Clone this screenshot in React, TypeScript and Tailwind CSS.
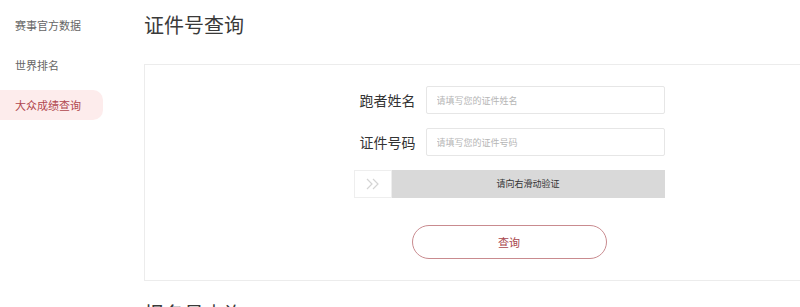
import React, { useState } from "react";

const menu = ["赛事官方数据", "世界排名", "大众成绩查询"];

const App: React.FC = () => {
  const [active] = useState(2);
  const [name, setName] = useState("");
  const [idNo, setIdNo] = useState("");

  return (
    <div
      className="w-[800px] h-[307px] overflow-hidden bg-white flex"
      style={{ fontFamily: '"Noto Sans CJK SC", "Noto Sans", sans-serif' }}
    >
      {/* Sidebar */}
      <div className="w-[144px] shrink-0 pt-[10px] flex flex-col gap-[10px]">
        {menu.map((m, i) => (
          <div
            key={m}
            className={`w-[103px] h-[30px] pl-[15px] flex items-center text-[11px] rounded-r-[10px] ${
              i === active ? "bg-[#fdecec] text-[#b1474e]" : "text-[#666]"
            }`}
          >
            {m}
          </div>
        ))}
      </div>

      {/* Main */}
      <div className="w-[730px] shrink-0">
        <h1 className="mt-[10px] h-[30px] leading-[30px] text-[20px] text-[#3a3a3a] font-normal">证件号查询</h1>

        <div className="mt-[24px] w-[730px] border border-[#ececec] pt-[21px] pb-[21px] flex flex-col items-center">
          <div className="w-[311px] flex flex-col gap-[14px]">
            <div className="flex items-center justify-end gap-[10px]">
              <label className="text-[14px] text-[#333]">跑者姓名</label>
              <input
                value={name}
                onChange={(e) => setName(e.target.value)}
                placeholder="请填写您的证件姓名"
                className="w-[239px] h-[28px] border border-[#e6e6e6] rounded-[2px] px-[10px] text-[9px] text-[#333] placeholder:text-[#b5b5b5] outline-none"
              />
            </div>
            <div className="flex items-center justify-end gap-[10px]">
              <label className="text-[14px] text-[#333]">证件号码</label>
              <input
                value={idNo}
                onChange={(e) => setIdNo(e.target.value)}
                placeholder="请填写您的证件号码"
                className="w-[239px] h-[28px] border border-[#e6e6e6] rounded-[2px] px-[10px] text-[9px] text-[#333] placeholder:text-[#b5b5b5] outline-none"
              />
            </div>
            {/* Slide verify */}
            <div className="h-[28px] flex">
              <div className="w-[38px] h-[28px] border border-[#eeeeee] bg-white flex items-center justify-center">
                <svg width="14" height="12" viewBox="0 0 14 12" fill="none" stroke="#d4d4d4" strokeWidth="1.2">
                  <path d="M1 1 L6 6 L1 11" />
                  <path d="M7 1 L12 6 L7 11" />
                </svg>
              </div>
              <div className="flex-1 bg-[#d9d9d9] flex items-center justify-center text-[9px] text-[#333]">
                请向右滑动验证
              </div>
            </div>
          </div>

          <button className="mt-[27px] w-[195px] h-[34px] rounded-full border border-[#c98b8f] text-[11px] text-[#a8464c] bg-white">
            查询
          </button>
        </div>

        <h2 className="mt-[18px] h-[30px] leading-[30px] text-[20px] text-[#3a3a3a] font-normal">报名号查询</h2>
      </div>
    </div>
  );
};

export default App;
